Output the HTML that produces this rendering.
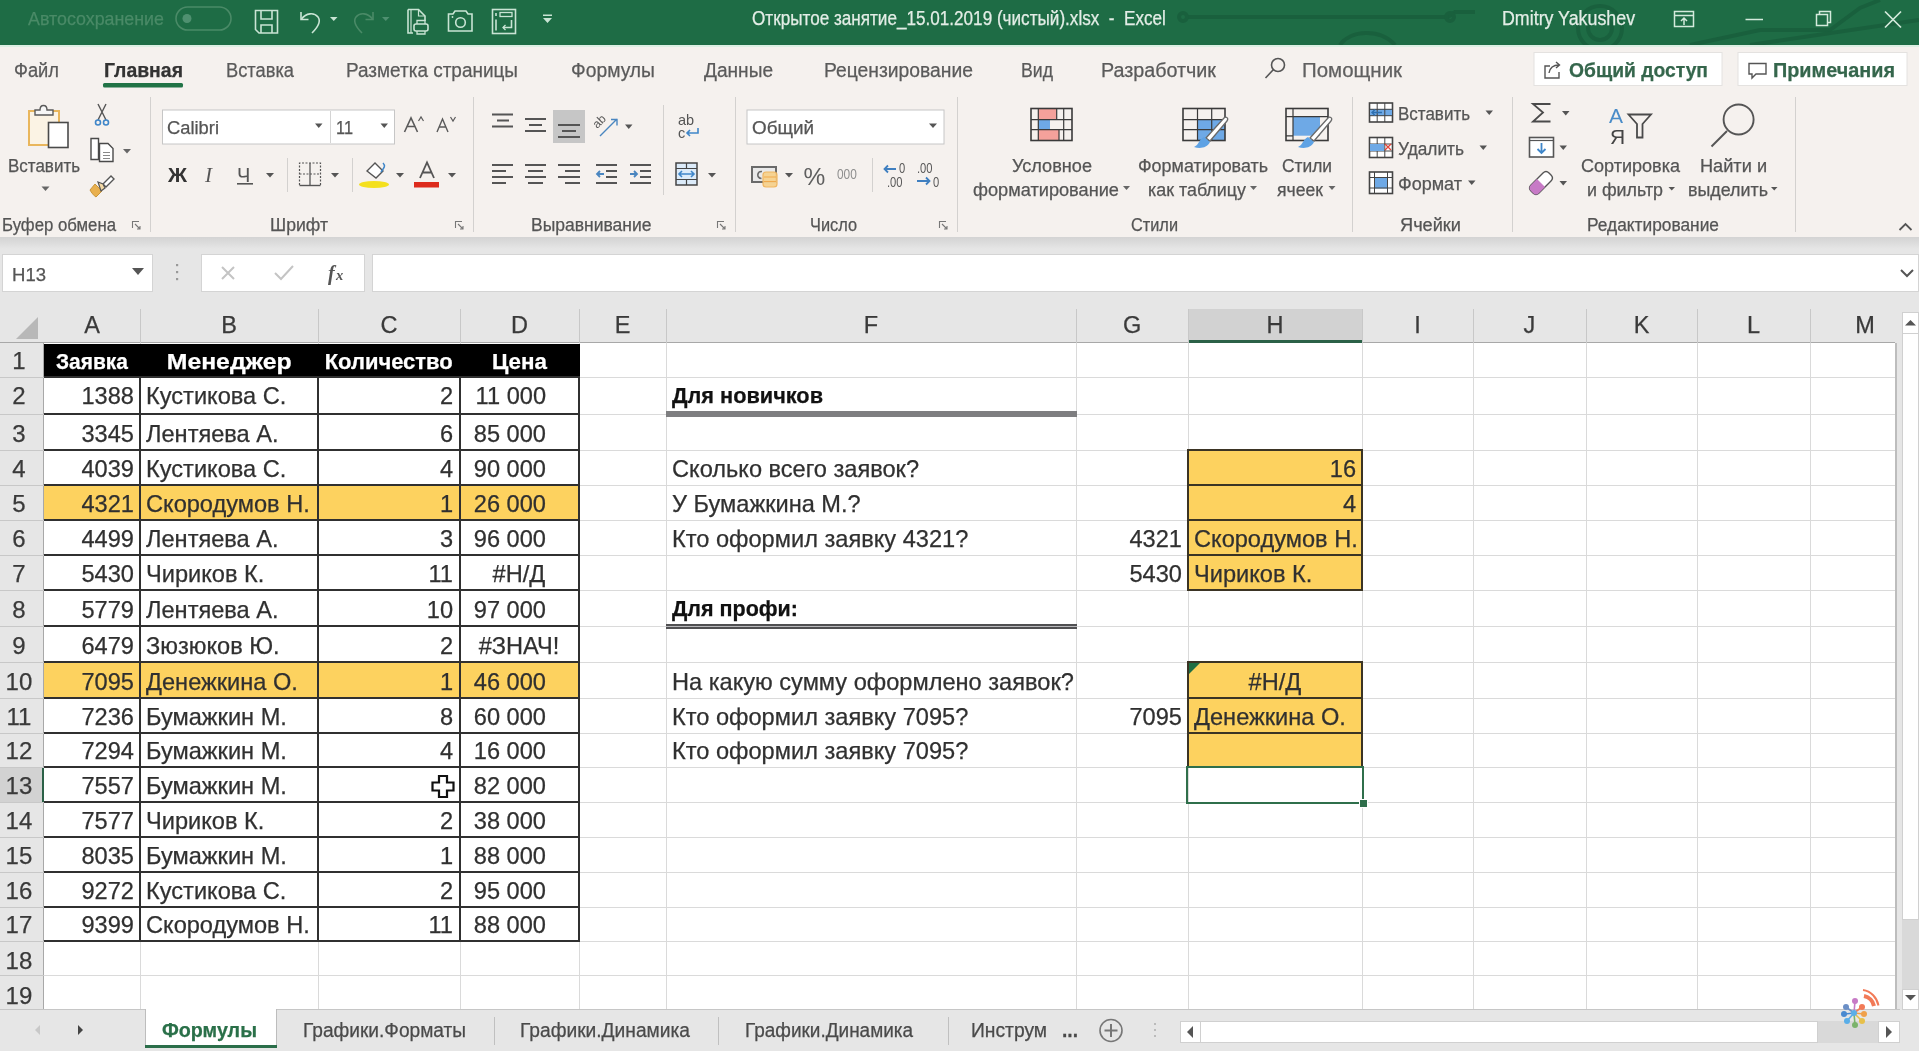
<!DOCTYPE html>
<html><head><meta charset="utf-8">
<style>
html,body{margin:0;padding:0}
body{width:1919px;height:1051px;overflow:hidden;position:relative;background:#fff;font-family:"Liberation Sans",sans-serif}
.a{position:absolute}
.t{position:absolute;white-space:pre;line-height:normal;-webkit-text-stroke:0.25px currentColor}
svg{position:absolute;overflow:visible}
</style></head><body><div style="position:absolute;left:0;top:0;width:1919px;height:1051px;overflow:hidden;filter:blur(0.7px)">
<!-- title bar -->
<div class="a" style="left:0;top:0;width:1919px;height:45px;background:#1e6c45"></div>
<!-- tabs + ribbon -->
<div class="a" style="left:0;top:45px;width:1919px;height:2px;background:#dcefe3;z-index:1"></div>
<div class="a" style="left:0;top:45px;width:1919px;height:193px;background:#f5f1ee"></div>
<!-- formula area -->
<div class="a" style="left:0;top:237px;width:1919px;height:73px;background:#e6e6e6"></div>
<div class="a" style="left:0;top:237px;width:1919px;height:12px;background:linear-gradient(#d3d3d3,#e6e6e6)"></div>
<div class="a" style="left:2px;top:254px;width:151px;height:38px;background:#fff;border:1px solid #d4d4d4;box-sizing:border-box"></div>
<div class="a" style="left:201px;top:254px;width:164px;height:38px;background:#fff;border:1px solid #d4d4d4;box-sizing:border-box"></div>
<div class="a" style="left:372px;top:254px;width:1547px;height:38px;background:#fff;border:1px solid #d4d4d4;box-sizing:border-box"></div>
<!-- column header -->
<div class="a" style="left:0;top:309px;width:1900px;height:34px;background:#e6e6e6"></div>
<div class="a" style="left:1188px;top:309px;width:174px;height:34px;background:#d2d2d2"></div>
<div class="a" style="left:0;top:342px;width:1895px;height:1px;background:#a8a8a8"></div>
<div class="a" style="left:1188px;top:340px;width:174px;height:3px;background:#2b6147"></div>
<!-- row header -->
<div class="a" style="left:0;top:343px;width:44px;height:667px;background:#e6e6e6"></div>
<div class="a" style="left:0;top:767px;width:44px;height:35px;background:#d2d2d2"></div>
<div class="a" style="left:43px;top:343px;width:1px;height:667px;background:#a8a8a8"></div>
<div class="a" style="left:42px;top:767px;width:2px;height:35px;background:#2b6147"></div>
<!-- select-all triangle -->
<svg style="left:0;top:309px" width="44" height="34"><path d="M16 30 L38 30 L38 8 Z" fill="#b8b8b8"/></svg>
<div class="a" style="left:140px;top:309px;width:1px;height:34px;background:#c8c8c8"></div>
<div class="a" style="left:318px;top:309px;width:1px;height:34px;background:#c8c8c8"></div>
<div class="a" style="left:460px;top:309px;width:1px;height:34px;background:#c8c8c8"></div>
<div class="a" style="left:579px;top:309px;width:1px;height:34px;background:#c8c8c8"></div>
<div class="a" style="left:666px;top:309px;width:1px;height:34px;background:#c8c8c8"></div>
<div class="a" style="left:1076px;top:309px;width:1px;height:34px;background:#c8c8c8"></div>
<div class="a" style="left:1188px;top:309px;width:1px;height:34px;background:#c8c8c8"></div>
<div class="a" style="left:1362px;top:309px;width:1px;height:34px;background:#c8c8c8"></div>
<div class="a" style="left:1473px;top:309px;width:1px;height:34px;background:#c8c8c8"></div>
<div class="a" style="left:1586px;top:309px;width:1px;height:34px;background:#c8c8c8"></div>
<div class="a" style="left:1697px;top:309px;width:1px;height:34px;background:#c8c8c8"></div>
<div class="a" style="left:1810px;top:309px;width:1px;height:34px;background:#c8c8c8"></div>
<div class="a" style="left:0;top:377px;width:44px;height:1px;background:#c8c8c8"></div>
<div class="a" style="left:0;top:414px;width:44px;height:1px;background:#c8c8c8"></div>
<div class="a" style="left:0;top:450px;width:44px;height:1px;background:#c8c8c8"></div>
<div class="a" style="left:0;top:485px;width:44px;height:1px;background:#c8c8c8"></div>
<div class="a" style="left:0;top:520px;width:44px;height:1px;background:#c8c8c8"></div>
<div class="a" style="left:0;top:555px;width:44px;height:1px;background:#c8c8c8"></div>
<div class="a" style="left:0;top:590px;width:44px;height:1px;background:#c8c8c8"></div>
<div class="a" style="left:0;top:626px;width:44px;height:1px;background:#c8c8c8"></div>
<div class="a" style="left:0;top:662px;width:44px;height:1px;background:#c8c8c8"></div>
<div class="a" style="left:0;top:698px;width:44px;height:1px;background:#c8c8c8"></div>
<div class="a" style="left:0;top:733px;width:44px;height:1px;background:#c8c8c8"></div>
<div class="a" style="left:0;top:767px;width:44px;height:1px;background:#c8c8c8"></div>
<div class="a" style="left:0;top:802px;width:44px;height:1px;background:#c8c8c8"></div>
<div class="a" style="left:0;top:837px;width:44px;height:1px;background:#c8c8c8"></div>
<div class="a" style="left:0;top:872px;width:44px;height:1px;background:#c8c8c8"></div>
<div class="a" style="left:0;top:907px;width:44px;height:1px;background:#c8c8c8"></div>
<div class="a" style="left:0;top:941px;width:44px;height:1px;background:#c8c8c8"></div>
<div class="a" style="left:0;top:975px;width:44px;height:1px;background:#c8c8c8"></div>
<div class="a" style="left:0;top:1010px;width:44px;height:1px;background:#c8c8c8"></div>
<div class="a" style="left:140px;top:343px;width:1px;height:667px;background:#dadada"></div>
<div class="a" style="left:318px;top:343px;width:1px;height:667px;background:#dadada"></div>
<div class="a" style="left:460px;top:343px;width:1px;height:667px;background:#dadada"></div>
<div class="a" style="left:579px;top:343px;width:1px;height:667px;background:#dadada"></div>
<div class="a" style="left:666px;top:343px;width:1px;height:667px;background:#dadada"></div>
<div class="a" style="left:1076px;top:343px;width:1px;height:667px;background:#dadada"></div>
<div class="a" style="left:1188px;top:343px;width:1px;height:667px;background:#dadada"></div>
<div class="a" style="left:1362px;top:343px;width:1px;height:667px;background:#dadada"></div>
<div class="a" style="left:1473px;top:343px;width:1px;height:667px;background:#dadada"></div>
<div class="a" style="left:1586px;top:343px;width:1px;height:667px;background:#dadada"></div>
<div class="a" style="left:1697px;top:343px;width:1px;height:667px;background:#dadada"></div>
<div class="a" style="left:1810px;top:343px;width:1px;height:667px;background:#dadada"></div>
<div class="a" style="left:1895px;top:343px;width:1px;height:667px;background:#dadada"></div>
<div class="a" style="left:44px;top:377px;width:1851px;height:1px;background:#dadada"></div>
<div class="a" style="left:44px;top:414px;width:1851px;height:1px;background:#dadada"></div>
<div class="a" style="left:44px;top:450px;width:1851px;height:1px;background:#dadada"></div>
<div class="a" style="left:44px;top:485px;width:1851px;height:1px;background:#dadada"></div>
<div class="a" style="left:44px;top:520px;width:1851px;height:1px;background:#dadada"></div>
<div class="a" style="left:44px;top:555px;width:1851px;height:1px;background:#dadada"></div>
<div class="a" style="left:44px;top:590px;width:1851px;height:1px;background:#dadada"></div>
<div class="a" style="left:44px;top:626px;width:1851px;height:1px;background:#dadada"></div>
<div class="a" style="left:44px;top:662px;width:1851px;height:1px;background:#dadada"></div>
<div class="a" style="left:44px;top:698px;width:1851px;height:1px;background:#dadada"></div>
<div class="a" style="left:44px;top:733px;width:1851px;height:1px;background:#dadada"></div>
<div class="a" style="left:44px;top:767px;width:1851px;height:1px;background:#dadada"></div>
<div class="a" style="left:44px;top:802px;width:1851px;height:1px;background:#dadada"></div>
<div class="a" style="left:44px;top:837px;width:1851px;height:1px;background:#dadada"></div>
<div class="a" style="left:44px;top:872px;width:1851px;height:1px;background:#dadada"></div>
<div class="a" style="left:44px;top:907px;width:1851px;height:1px;background:#dadada"></div>
<div class="a" style="left:44px;top:941px;width:1851px;height:1px;background:#dadada"></div>
<div class="a" style="left:44px;top:975px;width:1851px;height:1px;background:#dadada"></div>
<div class="a" style="left:44px;top:1010px;width:1851px;height:1px;background:#dadada"></div>
<!-- fills -->
<div class="a" style="left:44px;top:344px;width:536px;height:34px;background:#000"></div>
<div class="a" style="left:44px;top:485px;width:536px;height:35px;background:#fdd25f"></div>
<div class="a" style="left:44px;top:662px;width:536px;height:36px;background:#fdd25f"></div>
<div class="a" style="left:1188px;top:450px;width:174px;height:140px;background:#fdd25f"></div>
<div class="a" style="left:1188px;top:662px;width:174px;height:105px;background:#fdd25f"></div>
<div class="a" style="left:44px;top:376px;width:536px;height:2px;background:#303030"></div>
<div class="a" style="left:44px;top:413px;width:536px;height:2px;background:#303030"></div>
<div class="a" style="left:44px;top:449px;width:536px;height:2px;background:#303030"></div>
<div class="a" style="left:44px;top:484px;width:536px;height:2px;background:#303030"></div>
<div class="a" style="left:44px;top:519px;width:536px;height:2px;background:#303030"></div>
<div class="a" style="left:44px;top:554px;width:536px;height:2px;background:#303030"></div>
<div class="a" style="left:44px;top:589px;width:536px;height:2px;background:#303030"></div>
<div class="a" style="left:44px;top:625px;width:536px;height:2px;background:#303030"></div>
<div class="a" style="left:44px;top:661px;width:536px;height:2px;background:#303030"></div>
<div class="a" style="left:44px;top:697px;width:536px;height:2px;background:#303030"></div>
<div class="a" style="left:44px;top:732px;width:536px;height:2px;background:#303030"></div>
<div class="a" style="left:44px;top:766px;width:536px;height:2px;background:#303030"></div>
<div class="a" style="left:44px;top:801px;width:536px;height:2px;background:#303030"></div>
<div class="a" style="left:44px;top:836px;width:536px;height:2px;background:#303030"></div>
<div class="a" style="left:44px;top:871px;width:536px;height:2px;background:#303030"></div>
<div class="a" style="left:44px;top:906px;width:536px;height:2px;background:#303030"></div>
<div class="a" style="left:44px;top:940px;width:536px;height:2px;background:#303030"></div>
<div class="a" style="left:139px;top:377px;width:2px;height:565px;background:#303030"></div>
<div class="a" style="left:317px;top:377px;width:2px;height:565px;background:#303030"></div>
<div class="a" style="left:459px;top:377px;width:2px;height:565px;background:#303030"></div>
<div class="a" style="left:578px;top:377px;width:2px;height:565px;background:#303030"></div>
<div class="a" style="left:1187px;top:449px;width:176px;height:2px;background:#3b3424"></div>
<div class="a" style="left:1187px;top:484px;width:176px;height:2px;background:#3b3424"></div>
<div class="a" style="left:1187px;top:519px;width:176px;height:2px;background:#3b3424"></div>
<div class="a" style="left:1187px;top:554px;width:176px;height:2px;background:#3b3424"></div>
<div class="a" style="left:1187px;top:589px;width:176px;height:2px;background:#3b3424"></div>
<div class="a" style="left:1187px;top:449px;width:2px;height:142px;background:#3b3424"></div>
<div class="a" style="left:1361px;top:449px;width:2px;height:142px;background:#3b3424"></div>
<div class="a" style="left:1187px;top:661px;width:176px;height:2px;background:#3b3424"></div>
<div class="a" style="left:1187px;top:697px;width:176px;height:2px;background:#3b3424"></div>
<div class="a" style="left:1187px;top:732px;width:176px;height:2px;background:#3b3424"></div>
<div class="a" style="left:1187px;top:766px;width:176px;height:2px;background:#3b3424"></div>
<div class="a" style="left:1187px;top:661px;width:2px;height:107px;background:#3b3424"></div>
<div class="a" style="left:1361px;top:661px;width:2px;height:107px;background:#3b3424"></div>
<!-- F borders -->
<div class="a" style="left:666px;top:411px;width:411px;height:6px;background:#7e7e80"></div>
<div class="a" style="left:666px;top:624px;width:411px;height:5px;background:#505052"></div>
<div class="a" style="left:666px;top:626px;width:411px;height:1px;background:#b9b9bc"></div>
<!-- selection H13 -->
<div class="a" style="left:1186px;top:766px;width:178px;height:38px;border:2px solid #2f6f4b;box-sizing:border-box"></div>
<div class="a" style="left:1359px;top:799px;width:7px;height:7px;background:#2f6f4b;border:1px solid #fff"></div>
<!-- green error triangle H10 -->
<svg style="left:1189px;top:663px" width="12" height="12"><path d="M0 0 L11 0 L0 11 Z" fill="#1f6e43"/></svg>
<!-- scrollbars -->
<div class="a" style="left:1896px;top:309px;width:23px;height:701px;background:#e6e6e6"></div>
<div class="a" style="left:1895px;top:343px;width:2px;height:667px;background:#bdbdbd"></div>
<div class="a" style="left:1902px;top:312px;width:17px;height:678px;background:#d9d9d9"></div>
<div class="a" style="left:1902px;top:312px;width:17px;height:608px;background:#fff;border:1px solid #d0d0d0;box-sizing:border-box"></div>
<div class="a" style="left:0;top:1010px;width:1919px;height:41px;background:#e6e6e6"></div>
<div class="a" style="left:0;top:1009px;width:1900px;height:1px;background:#c6c6c6"></div>
<div class="a" style="left:145px;top:1009px;width:132px;height:38px;background:#fff;border-left:1px solid #bdbdbd;border-right:1px solid #bdbdbd;box-sizing:border-box"></div>
<div class="a" style="left:145px;top:1044.5px;width:132px;height:3.5px;background:#2b6e4a"></div>
<div class="a" style="left:1180px;top:1021px;width:698px;height:22px;background:#d9d9d9"></div>
<div class="a" style="left:1180px;top:1021px;width:638px;height:22px;background:#fff;border:1px solid #d0d0d0;box-sizing:border-box"></div>
<div class="a" style="left:1878px;top:1021px;width:22px;height:22px;background:#fff;border:1px solid #d0d0d0;box-sizing:border-box"></div>
<div class="a" style="left:1902px;top:989px;width:17px;height:21px;background:#fff;border:1px solid #d0d0d0;box-sizing:border-box"></div>
<div class="a" style="left:1902px;top:312px;width:17px;height:22px;background:#fff;border:1px solid #d0d0d0;box-sizing:border-box"></div>
<svg style="left:0;top:0" width="1919" height="1051" viewBox="0 0 1919 1051">
<!-- ===== TITLE BAR ===== -->
<!-- title bar pattern -->
<svg x="0" y="0" width="1919" height="45" style="position:static;overflow:hidden"><g fill="none" stroke="#195f3d" stroke-width="4" opacity="0.9">
 <path d="M1185 17 H1448 L1455 12 H1475"/>
 <circle cx="1183" cy="17" r="4"/>
 <circle cx="1450" cy="17" r="4"/>
 <path d="M1340 45 C1350 30 1380 28 1395 45"/>
 <circle cx="1600" cy="28" r="22"/>
 <circle cx="1600" cy="28" r="12"/>
 <path d="M1690 45 L1760 30 H1830 L1860 8 L1880 0"/>
 <path d="M1750 45 L1919 20"/>
</g></svg>

<g fill="none" stroke="#c9e4d4" stroke-width="1.6">
 <!-- autosave toggle -->
 <rect x="176" y="7" width="55" height="23" rx="11.5" stroke="#4a8a67"/>
 <!-- save -->
 <path d="M255.5 10.5 H277.5 V33 H259 L255.5 29.5 Z"/>
 <path d="M261 10.5 V19 H272 V10.5"/>
 <path d="M261 33 V25 H272 V33"/>
 <!-- undo -->
 <path d="M301 12 V19.5 H308.5"/>
 <path d="M301.5 19 C306 13 314 12 318 17 C321 21 318 27 312 33"/>
 <!-- redo (faded) -->
 <path d="M373 12 V19.5 H365.5" stroke="#4a8a67"/>
 <path d="M372.5 19 C368 13 360 12 356 17 C353 21 356 27 362 33" stroke="#4a8a67"/>
 <!-- print preview -->
 <path d="M408 9.5 H418.5 L425 16 V21"/>
 <path d="M418.5 9.5 V16 H425" stroke-width="1.2"/>
 <path d="M408 9.5 V33 H413"/>
 <path d="M411 9.5 V33" stroke-width="1.2"/>
 <rect x="414" y="24" width="14" height="7" rx="2"/>
 <path d="M417 24 V20.5 H425 V24 M417 31 V34 H425 V31" stroke-width="1.3"/>
 <!-- camera -->
 <path d="M448.5 14 H453 L455 11 H466 L468 14 H472 V31 H448.5 Z"/>
 <circle cx="460.5" cy="22.5" r="4.8"/>
 <circle cx="452.5" cy="17" r="0.9" fill="#c9e4d4" stroke="none"/>
 <!-- custom icon -->
 <rect x="492.5" y="9.5" width="23" height="24"/>
 <path d="M496 13 V16 M496 19.5 V30.5" stroke-width="1.6"/>
 <rect x="500" y="12.5" width="12" height="4" stroke-width="1.3"/>
 <path d="M511.5 20 V27.5 H503" />
 <path d="M505.5 25 L503 27.5 L505.5 30" stroke-width="1.3"/>
</g>
<g fill="#c9e4d4">
 <circle cx="187" cy="18.5" r="4.5" fill="#4f9070"/>
 <path d="M330 17 H337.5 L333.75 21 Z"/>
 <path d="M382 17 H389.5 L385.75 21 Z" fill="#4f9070"/>
 <path d="M543 14.5 H552 V16 H543 Z M543 18 H552 L547.5 23 Z"/>
</g>
<g fill="none" stroke="#d4eadc" stroke-width="1.5">
 <!-- ribbon display options -->
 <rect x="1674.5" y="11.5" width="19" height="15"/>
 <path d="M1674.5 15.5 H1693.5"/>
 <path d="M1684 25 V18 M1681 21 L1684 18 L1687 21"/>
 <!-- minimize -->
 <path d="M1745.5 19.5 H1763"/>
 <!-- restore -->
 <rect x="1816.5" y="14.5" width="11" height="11"/>
 <path d="M1819.5 14.5 V11.5 H1830.5 V22.5 H1827.5"/>
 <!-- close -->
 <path d="M1885 11.5 L1901 27.5 M1901 11.5 L1885 27.5" stroke-width="1.7"/>
</g>

<!-- ===== TABS ROW ===== -->
<rect x="103" y="83" width="80" height="4.5" rx="1.5" fill="#217346"/>
<g fill="none" stroke="#555" stroke-width="1.6">
 <circle cx="1278" cy="65" r="6.5"/>
 <path d="M1273.5 69.5 L1265.5 78"/>
</g>
<rect x="1534" y="52.5" width="188" height="33" fill="#fff" stroke="#e4e2e0"/>
<rect x="1738" y="52.5" width="169" height="33" fill="#fff" stroke="#e4e2e0"/>
<g fill="none" stroke="#555" stroke-width="1.4">
 <path d="M1550 66 H1545 V78 H1559 V72"/>
 <path d="M1549 73 C1550 67 1554 65 1559 65 M1556 62 L1559.5 65 L1556 68"/>
 <path d="M1749 63.5 H1766 V74 H1756 L1752 78 V74 H1749 Z"/>
</g>

<!-- ===== RIBBON ===== -->
<!-- group separators -->
<g fill="#d3d1cf">
 <rect x="150" y="97" width="1" height="135"/>
 <rect x="473" y="97" width="1" height="135"/>
 <rect x="735" y="97" width="1" height="135"/>
 <rect x="957" y="97" width="1" height="135"/>
 <rect x="1352" y="97" width="1" height="135"/>
 <rect x="1512" y="97" width="1" height="135"/>
 <rect x="1795" y="97" width="1" height="135"/>
 <rect x="287" y="158" width="1" height="34"/>
 <rect x="352" y="158" width="1" height="34"/>
 <rect x="663" y="105" width="1" height="90"/>
 <rect x="872" y="158" width="1" height="34"/>
</g>
<!-- dialog launchers -->
<g fill="none" stroke="#777" stroke-width="1.1">
 <path d="M132.5 228 V221.5 H139 M135 224 L140 229 M137 229 H140 V226"/>
 <path d="M455.5 228 V221.5 H462 M458 224 L463 229 M460 229 H463 V226"/>
 <path d="M717.5 228 V221.5 H724 M720 224 L725 229 M722 229 H725 V226"/>
 <path d="M939.5 228 V221.5 H946 M942 224 L947 229 M944 229 H947 V226"/>
</g>
<!-- collapse ribbon -->
<path d="M1899.5 230 L1905.5 224 L1911.5 230" fill="none" stroke="#555" stroke-width="1.8"/>

<!-- Clipboard -->
<rect x="29" y="111" width="30" height="34" fill="#fbf3e4" stroke="#e9b65c" stroke-width="2"/>
<path d="M35 115 V110 H40 C40 104 47 104 47 110 H53 V115 Z" fill="#f7f7f7" stroke="#5a5a5a" stroke-width="1.4"/>
<rect x="48.5" y="122.5" width="19.5" height="25" fill="#fff" stroke="#4a4a4a" stroke-width="1.6"/>
<path d="M41.5 186.5 H49.5 L45.5 191 Z" fill="#666"/>
<!-- scissors -->
<g fill="none" stroke="#555" stroke-width="1.4">
 <path d="M98 104 L106 120 M106 104 L98 120"/>
</g>
<g fill="none" stroke="#3f86c9" stroke-width="1.6">
 <circle cx="98" cy="122.5" r="2.5"/>
 <circle cx="106" cy="122.5" r="2.5"/>
</g>
<!-- copy -->
<g fill="#fff" stroke="#4a4a4a" stroke-width="1.4">
 <path d="M91 138.5 H98.5 V159.5 H91 Z"/>
 <path d="M99.5 143.5 H108 L113 148.5 V161.5 H99.5 Z"/>
</g>
<path d="M103 152.5 H110 M103 155.5 H110 M103 158.5 H110" stroke="#888" stroke-width="1"/>
<path d="M123 149 H131 L127 153.5 Z" fill="#666"/>
<!-- format painter -->
<path d="M103 184 L111 176 L114 179 L106 187 Z" fill="#fff" stroke="#555" stroke-width="1.4"/>
<path d="M95 184 L102 191 L96 197 C94 196 91 192 90 190 Z" fill="#e9b04e" stroke="#c9963a" stroke-width="1"/>
<path d="M98 182 L103 184 L105 188 L101 191 Z" fill="#f3d9a6" stroke="#555" stroke-width="1.2"/>

<!-- Font boxes -->
<rect x="162.5" y="110" width="232" height="34" fill="#fff" stroke="#c6c6c6"/>
<rect x="330" y="111" width="1" height="32" fill="#d4d4d4"/>
<g fill="#555">
 <path d="M315 123.5 H322.5 L318.75 128 Z"/>
 <path d="M380.5 123.5 H388 L384.25 128 Z"/>
 <path d="M266 173 H274 L270 177.5 Z"/>
 <path d="M331 173 H339 L335 177.5 Z"/>
 <path d="M396 173 H404 L400 177.5 Z"/>
 <path d="M448 173 H456 L452 177.5 Z"/>
</g>
<!-- A^ A˅ -->
<g fill="none" stroke="#5a5a5a" stroke-width="1.6">
 <path d="M404.5 132 L411 118 L417.5 132 M407 126.5 H415"/>
 <path d="M418.5 121 L421 117 L423.5 121" stroke-width="1.2"/>
 <path d="M437 132 L442.5 119 L448 132 M439.5 127 H445.5" stroke-width="1.4"/>
 <path d="M450.5 117 L453 121 L455.5 117" stroke-width="1.2"/>
</g>
<!-- Ж I Ч -->
<text x="168" y="181.5" font-family="Liberation Sans" font-weight="bold" font-size="21" fill="#333">Ж</text>
<text x="205" y="181.5" font-family="Liberation Serif" font-style="italic" font-size="21" fill="#555">I</text>
<text x="237" y="181.5" font-family="Liberation Sans" font-size="20" fill="#555">Ч</text>
<rect x="237" y="183" width="16" height="1.6" fill="#555"/>
<!-- borders icon -->
<g fill="none" stroke="#555" stroke-width="1.4">
 <path d="M299.5 185.5 H320.5"/>
 <path d="M310 163 V185.5" stroke-width="1.3"/>
 <path d="M299.5 185 V163 H320.5 V185 M299.5 174 H320.5" stroke-dasharray="2 1.5" stroke-width="1.2"/>
</g>
<!-- fill color -->
<path d="M367 171 L375 163 L383 171 L376 178 Z" fill="#fff" stroke="#555" stroke-width="1.4"/>
<path d="M381 172 C384 168 386 166 383 163" fill="none" stroke="#3f86c9" stroke-width="1.5"/>
<ellipse cx="374" cy="184.5" rx="15" ry="3.5" fill="#f4e01e"/>
<!-- font color -->
<path d="M420 178 L427 162.5 L434 178 M422.5 172.5 H431.5" fill="none" stroke="#555" stroke-width="1.8"/>
<rect x="414" y="182" width="25" height="5.5" fill="#dd2b1c"/>

<!-- Alignment -->
<rect x="553" y="110" width="32" height="33" fill="#c6c6c6"/>
<g stroke="#555" stroke-width="2" fill="none">
 <path d="M492 114.5 H513 M497 120.5 H509 M492 126.5 H513"/>
 <path d="M525 119 H546 M529 125 H542 M525 131 H546"/>
 <path d="M558 125 H580 M562 131 H576 M558 137 H580"/>
 <path d="M492 165 H513 M492 171 H506 M492 177 H513 M492 183 H506"/>
 <path d="M525 165 H546 M528 171 H543 M525 177 H546 M528 183 H543"/>
 <path d="M558 165 H580 M565 171 H580 M558 177 H580 M565 183 H580"/>
 <path d="M596 165 H617 M606 171 H617 M606 177 H617 M596 183 H617"/>
 <path d="M630 165 H651 M640 171 H651 M640 177 H651 M630 183 H651"/>
</g>
<g stroke="#4a86c0" stroke-width="1.8" fill="none">
 <path d="M604 174 H597 M600 171 L597 174 L600 177"/>
 <path d="M630 174 H637 M634 171 L637 174 L634 177"/>
 <path d="M600 136 L617 119 M611 119.5 H617 V125.5" stroke-width="1.4"/>
</g>
<text x="593" y="125" font-family="Liberation Sans" font-size="12" fill="#555" transform="rotate(-45 600 122)">ab</text>
<path d="M625 124.5 H632.5 L628.75 129 Z" fill="#555"/>
<!-- wrap text -->
<text x="678" y="125" font-family="Liberation Sans" font-size="14.5" fill="#555">ab</text>
<text x="678" y="138" font-family="Liberation Sans" font-size="14.5" fill="#555">c</text>
<path d="M698 128 V133 H687 M690 130 L687 133 L690 136" fill="none" stroke="#3f86c9" stroke-width="1.6"/>
<!-- merge -->
<rect x="676" y="163" width="21" height="22" fill="#dcebf9" stroke="#444" stroke-width="1.5"/>
<path d="M676 168.5 H697 M676 179.5 H697 M686.5 163 V168.5 M686.5 179.5 V185" stroke="#444" stroke-width="1.2"/>
<path d="M679 174 H694 M682 171 L679 174 L682 177 M691 171 L694 174 L691 177" fill="none" stroke="#3f86c9" stroke-width="1.6"/>
<path d="M708 173 H716 L712 177.5 Z" fill="#555"/>

<!-- Number -->
<rect x="747" y="110" width="197" height="34" fill="#fff" stroke="#c6c6c6"/>
<path d="M929 123.5 H937 L933 128 Z" fill="#555"/>
<rect x="752" y="167" width="24" height="15" fill="#e9e9e9" stroke="#6a6a6a" stroke-width="2"/>
<path d="M762 171.5 C757 171 756 178 761.5 178.5" fill="none" stroke="#6a6a6a" stroke-width="1.6"/>
<rect x="763" y="172" width="14" height="15" rx="3" fill="#f7d28e" stroke="#f0b35a" stroke-width="1.2" opacity="0.95"/>
<path d="M764 177 H776 M764 181.5 H776" stroke="#f0a94c" stroke-width="1"/>
<path d="M785 173 H793 L789 177.5 Z" fill="#555"/>
<text x="803.5" y="185" font-family="Liberation Sans" font-size="24.5" fill="#5f5f5f">%</text>
<text x="837" y="179.5" font-family="Liberation Sans" font-size="14" fill="#8f8f8f" transform="translate(837 0) scale(0.85 1) translate(-837 0)">000</text>
<g font-family="Liberation Sans" font-size="14" fill="#5a5a5a">
<text x="899" y="173" transform="translate(899 0) scale(0.8 1) translate(-899 0)">0</text>
<text x="887" y="187" transform="translate(887 0) scale(0.8 1) translate(-887 0)">.00</text>
<text x="917" y="173" transform="translate(917 0) scale(0.8 1) translate(-917 0)">.00</text>
<text x="933" y="187" transform="translate(933 0) scale(0.8 1) translate(-933 0)">0</text>
</g>
<path d="M896 169 H884.5 M888 165.5 L884.5 169 L888 172.5" fill="none" stroke="#3f7fc0" stroke-width="1.8"/>
<path d="M917 181 H929.5 M926 177.5 L929.5 181 L926 184.5" fill="none" stroke="#3f7fc0" stroke-width="1.8"/>

<!-- Conditional formatting -->
<rect x="1038" y="108.5" width="18.5" height="11" fill="#f4a19b"/>
<rect x="1038" y="130" width="21" height="10.5" fill="#f4a19b"/>
<rect x="1038" y="119.5" width="12" height="10.5" fill="#6ea9e6"/>
<g fill="none" stroke="#3a3a3a" stroke-width="1.6">
 <rect x="1031" y="108.5" width="41" height="32"/>
 <path d="M1038.3 108.5 V140.5 M1056.7 108.5 V119.7 M1063.7 108.5 V140.5 M1059 130 V140.5 M1031 119.7 H1072 M1031 129.7 H1072" stroke-width="1.2"/>
</g>
<path d="M1123 186 H1130 L1126.5 190 Z" fill="#666"/>
<!-- Format as table -->
<rect x="1197.5" y="119.7" width="27.5" height="20.8" fill="#6ea9e6"/>
<g fill="none" stroke="#3a3a3a" stroke-width="1.6">
 <rect x="1183" y="108.5" width="42" height="32"/>
 <path d="M1197.5 108.5 V140.5 M1211.7 108.5 V140.5 M1183 119.7 H1225 M1183 129.7 H1225" stroke-width="1.2"/>
</g>
<path d="M1206 138 L1224 118 C1226 116 1229 118 1227 121 L1210 141 Z" fill="#fff" stroke="#6a6a6a" stroke-width="1.3"/>
<path d="M1204 137 L1210 142 C1207 148 1200 149 1194 147 C1199 145 1199 139 1204 137 Z" fill="#5ea2e4"/>
<path d="M1250 186 H1257 L1253.5 190 Z" fill="#666"/>
<!-- Cell styles -->
<rect x="1293" y="116.7" width="27" height="19" fill="#6ea9e6"/>
<g fill="none" stroke="#3a3a3a" stroke-width="1.6">
 <rect x="1286" y="108.5" width="42" height="32"/>
 <path d="M1293 108.5 V140.5 M1286 116.7 H1328 M1286 135.8 H1293" stroke-width="1.2"/>
</g>
<path d="M1310 138 L1328 118 C1330 116 1333 118 1331 121 L1314 141 Z" fill="#fff" stroke="#6a6a6a" stroke-width="1.3"/>
<path d="M1308 137 L1314 142 C1311 148 1304 149 1298 147 C1303 145 1303 139 1308 137 Z" fill="#5ea2e4"/>
<path d="M1328.5 186 H1335.5 L1332 190 Z" fill="#666"/>

<!-- Cells group -->
<g>
 <rect x="1369.5" y="103" width="23" height="19" fill="#fff" stroke="#444" stroke-width="1.6"/>
 <rect x="1370" y="109" width="22" height="7" fill="#6ea9e6"/>
 <path d="M1369.5 109.3 H1392.5 M1369.5 115.7 H1392.5 M1377.2 103 V122 M1384.8 103 V122" stroke="#444" stroke-width="1"/>
 <path d="M1382 112.5 H1372 M1375 109.5 L1372 112.5 L1375 115.5" fill="none" stroke="#2d6fb0" stroke-width="1.4"/>
 <rect x="1369.5" y="137.5" width="23" height="20" fill="#fff" stroke="#444" stroke-width="1.6"/>
 <path d="M1369.5 144 H1392.5 M1369.5 151 H1392.5 M1377.2 137.5 V157.5 M1384.8 137.5 V157.5" stroke="#444" stroke-width="1"/>
 <rect x="1370" y="144" width="14" height="7" fill="#6ea9e6"/>
 <path d="M1385 144 L1391 150 M1391 144 L1385 150" stroke="#e0443a" stroke-width="1.3"/>
 <rect x="1369.5" y="172" width="23" height="21.5" fill="#fff" stroke="#444" stroke-width="1.6"/>
 <rect x="1374" y="177" width="14" height="11.5" fill="#6ea9e6"/>
 <path d="M1369.5 177.5 H1392.5 M1369.5 188 H1392.5 M1374.5 172 V193.5 M1387.5 172 V193.5" stroke="#444" stroke-width="1"/>
</g>
<g fill="#555">
 <path d="M1485.5 110.5 H1493 L1489.25 115 Z"/>
 <path d="M1479.5 145.5 H1487 L1483.25 150 Z"/>
 <path d="M1468 180.5 H1475.5 L1471.75 185 Z"/>
</g>

<!-- Editing -->
<path d="M1550.5 104 H1533 L1543 112.5 L1533 121.5 H1550.5" fill="none" stroke="#4a4a4a" stroke-width="1.8"/>
<rect x="1529.5" y="137.5" width="24" height="19.5" fill="#fff" stroke="#555" stroke-width="1.6"/>
<path d="M1529.5 140.5 H1553.5" stroke="#555" stroke-width="1.2"/>
<path d="M1541.5 143 V153 M1537.5 149 L1541.5 153 L1545.5 149" fill="none" stroke="#3f86c9" stroke-width="1.8"/>
<path d="M1531 185 L1543 173 C1545 171 1547 171 1549 173 L1551 175 C1553 177 1553 179 1551 181 L1539 193 C1537 195 1535 195 1533 193 L1531 191 C1529 189 1529 187 1531 185 Z" fill="#fff" stroke="#555" stroke-width="1.4"/>
<path d="M1531 185 L1537 179 L1545 187 L1539 193 C1537 195 1535 195 1533 193 L1531 191 C1529 189 1529 187 1531 185 Z" fill="#c77ac6"/>
<g fill="#555">
 <path d="M1562 111 H1569.5 L1565.75 115.5 Z"/>
 <path d="M1559.5 145.5 H1567 L1563.25 150 Z"/>
 <path d="M1559.5 181 H1567 L1563.25 185.5 Z"/>
 <path d="M1668.5 187 H1675 L1671.75 190.5 Z"/>
 <path d="M1771 187 H1777.5 L1774.25 190.5 Z"/>
</g>
<text x="1609" y="122.5" font-family="Liberation Sans" font-size="21" fill="#4a8cc8">A</text>
<text x="1610" y="143.5" font-family="Liberation Sans" font-size="21" fill="#444">Я</text>
<path d="M1628.5 114.5 H1651 L1642.5 124 V137.5 H1637 V124 Z" fill="none" stroke="#4a4a4a" stroke-width="1.8"/>
<circle cx="1738.6" cy="119.5" r="15" fill="none" stroke="#555" stroke-width="1.9"/>
<path d="M1727 131 L1711.5 146.5" stroke="#555" stroke-width="1.9"/>

<!-- ===== FORMULA BAR ===== -->
<path d="M132 268 H144 L138 275 Z" fill="#555"/>
<g fill="#999">
 <rect x="176" y="264" width="2.2" height="2.2"/>
 <rect x="176" y="271" width="2.2" height="2.2"/>
 <rect x="176" y="278" width="2.2" height="2.2"/>
</g>
<path d="M222 267 L234 279 M234 267 L222 279" stroke="#c4c4c4" stroke-width="2"/>
<path d="M275 273 L281 279 L293 266" fill="none" stroke="#c4c4c4" stroke-width="2"/>
<text x="328" y="280" font-family="Liberation Serif" font-style="italic" font-weight="bold" font-size="20" fill="#555">f</text>
<text x="336" y="280" font-family="Liberation Serif" font-style="italic" font-weight="bold" font-size="14.5" fill="#555">x</text>
<path d="M1901 270 L1907 276 L1913 270" fill="none" stroke="#555" stroke-width="2"/>

<!-- ===== SHEET TABS & SCROLL ===== -->
<path d="M40 1025 L35 1030 L40 1035 Z" fill="#c8c8c8"/>
<path d="M78 1025 L83 1030 L78 1035 Z" fill="#444"/>
<rect x="494" y="1017" width="1" height="28" fill="#c0c0c0"/>
<rect x="718" y="1017" width="1" height="28" fill="#c0c0c0"/>
<rect x="948" y="1017" width="1" height="28" fill="#c0c0c0"/>
<circle cx="1111" cy="1030.5" r="11" fill="none" stroke="#777" stroke-width="1.6"/>
<path d="M1104.5 1030.5 H1117.5 M1111 1024 V1037" stroke="#777" stroke-width="2"/>
<g fill="#bbb">
 <rect x="1154" y="1023" width="2" height="2"/>
 <rect x="1154" y="1029" width="2" height="2"/>
 <rect x="1154" y="1035" width="2" height="2"/>
</g>
<rect x="1180.5" y="1021.5" width="20" height="21" fill="#fff" stroke="#d0d0d0"/>
<path d="M1193 1026 L1187 1032 L1193 1038 Z" fill="#555"/>
<path d="M1886 1026 L1892 1032 L1886 1038 Z" fill="#555"/>
<path d="M1904 318 L1910 312 L1916 318" fill="none" stroke="#555" stroke-width="0"/>
<path d="M1905 325.5 H1916 L1910.5 320 Z" fill="#555"/>
<path d="M1905 995 H1916 L1910.5 1000.5 Z" fill="#555"/>
<!-- logo watermark -->
<g>
 <path d="M1863 990 C1871 991 1877 998 1878.5 1005.5" fill="none" stroke="#f27a57" stroke-width="2"/>
 <path d="M1864 996 C1869 997 1873 1001 1874 1006" fill="none" stroke="#f27a57" stroke-width="4"/>
 <g stroke-width="1.6">
  <path d="M1854 1013 L1846 1007" stroke="#6b8fc6"/>
  <path d="M1854 1013 L1855 1001" stroke="#c77ac6"/>
  <path d="M1854 1013 L1862 1007" stroke="#f27a57"/>
  <path d="M1854 1013 L1845 1014" stroke="#4a8ad0"/>
  <path d="M1854 1013 L1847 1021" stroke="#5aaee8"/>
  <path d="M1854 1013 L1855 1025" stroke="#7bb36b"/>
  <path d="M1854 1013 L1862 1021" stroke="#e7c04a"/>
  <path d="M1854 1013 L1864 1014" stroke="#f0a04a"/>
 </g>
 <circle cx="1846" cy="1007" r="3" fill="#6b8fc6"/>
 <circle cx="1855" cy="1001" r="3" fill="#c77ac6"/>
 <circle cx="1862" cy="1007" r="3" fill="#f27a57"/>
 <circle cx="1844" cy="1014" r="3" fill="#4a8ad0"/>
 <circle cx="1847" cy="1021" r="3" fill="#5aaee8"/>
 <circle cx="1855" cy="1025" r="3" fill="#7bb36b"/>
 <circle cx="1862" cy="1021" r="3" fill="#e7c04a"/>
 <circle cx="1864" cy="1014" r="3" fill="#f0a04a"/>
 <circle cx="1854" cy="1013" r="3" fill="#5aaee8"/>
</g>
</svg>

<div class="t" style="left:28.0px;top:7.8px;font-size:19px;color:#4a8a67;transform:scaleX(0.939);transform-origin:left;">Автосохранение</div>
<div class="t" style="left:752.0px;top:7.4px;font-size:19.5px;color:#e3ede6;transform:scaleX(0.878);transform-origin:left;">Открытое занятие_15.01.2019 (чистый).xlsx  -  Excel</div>
<div class="t" style="left:1502.0px;top:7.4px;font-size:19.5px;color:#e3ede6;transform:scaleX(0.914);transform-origin:left;">Dmitry Yakushev</div>
<div class="t" style="left:14.0px;top:58.9px;font-size:20px;color:#5a5a5a;transform:scaleX(0.915);transform-origin:left;">Файл</div>
<div class="t" style="left:104.0px;top:58.9px;font-size:20px;color:#333;font-weight:bold;transform:scaleX(0.971);transform-origin:left;">Главная</div>
<div class="t" style="left:226.0px;top:58.9px;font-size:20px;color:#5a5a5a;transform:scaleX(0.915);transform-origin:left;">Вставка</div>
<div class="t" style="left:346.0px;top:58.9px;font-size:20px;color:#5a5a5a;transform:scaleX(0.948);transform-origin:left;">Разметка страницы</div>
<div class="t" style="left:571.0px;top:58.9px;font-size:20px;color:#5a5a5a;transform:scaleX(0.965);transform-origin:left;">Формулы</div>
<div class="t" style="left:704.0px;top:58.9px;font-size:20px;color:#5a5a5a;transform:scaleX(0.955);transform-origin:left;">Данные</div>
<div class="t" style="left:824.0px;top:58.9px;font-size:20px;color:#5a5a5a;transform:scaleX(0.965);transform-origin:left;">Рецензирование</div>
<div class="t" style="left:1021.0px;top:58.9px;font-size:20px;color:#5a5a5a;transform:scaleX(0.884);transform-origin:left;">Вид</div>
<div class="t" style="left:1101.0px;top:58.9px;font-size:20px;color:#5a5a5a;transform:scaleX(0.986);transform-origin:left;">Разработчик</div>
<div class="t" style="left:1302.0px;top:58.9px;font-size:20px;color:#606060;transform:scaleX(1.023);transform-origin:left;">Помощник</div>
<div class="t" style="left:1569.0px;top:58.9px;font-size:20px;color:#35664c;font-weight:bold;transform:scaleX(0.964);transform-origin:left;">Общий доступ</div>
<div class="t" style="left:1773.0px;top:58.9px;font-size:20px;color:#35664c;font-weight:bold;transform:scaleX(0.991);transform-origin:left;">Примечания</div>
<div class="t" style="left:2.0px;top:215.2px;font-size:17.5px;color:#555555;transform:scaleX(0.959);transform-origin:left;">Буфер обмена</div>
<div class="t" style="left:270.0px;top:215.2px;font-size:17.5px;color:#555555;transform:scaleX(1.007);transform-origin:left;">Шрифт</div>
<div class="t" style="left:531.0px;top:215.2px;font-size:17.5px;color:#555555;">Выравнивание</div>
<div class="t" style="left:810.0px;top:215.2px;font-size:17.5px;color:#555555;transform:scaleX(0.934);transform-origin:left;">Число</div>
<div class="t" style="left:1131.0px;top:215.2px;font-size:17.5px;color:#555555;transform:scaleX(0.932);transform-origin:left;">Стили</div>
<div class="t" style="left:1400.0px;top:215.2px;font-size:17.5px;color:#555555;transform:scaleX(1.039);transform-origin:left;">Ячейки</div>
<div class="t" style="left:1587.0px;top:215.2px;font-size:17.5px;color:#555555;transform:scaleX(0.990);transform-origin:left;">Редактирование</div>
<div class="t" style="left:8.0px;top:156.2px;font-size:17.5px;color:#555555;transform:scaleX(0.971);transform-origin:left;">Вставить</div>
<div class="t" style="left:1012.0px;top:156.2px;font-size:17.5px;color:#555555;transform:scaleX(1.035);transform-origin:left;">Условное</div>
<div class="t" style="left:973.0px;top:180.2px;font-size:17.5px;color:#555555;transform:scaleX(1.039);transform-origin:left;">форматирование</div>
<div class="t" style="left:1138.0px;top:156.2px;font-size:17.5px;color:#555555;transform:scaleX(1.024);transform-origin:left;">Форматировать</div>
<div class="t" style="left:1148.0px;top:180.2px;font-size:17.5px;color:#555555;transform:scaleX(1.022);transform-origin:left;">как таблицу</div>
<div class="t" style="left:1282.0px;top:156.2px;font-size:17.5px;color:#555555;transform:scaleX(0.992);transform-origin:left;">Стили</div>
<div class="t" style="left:1277.0px;top:180.2px;font-size:17.5px;color:#555555;transform:scaleX(1.006);transform-origin:left;">ячеек</div>
<div class="t" style="left:1398.0px;top:104.2px;font-size:17.5px;color:#555555;transform:scaleX(0.971);transform-origin:left;">Вставить</div>
<div class="t" style="left:1398.0px;top:139.2px;font-size:17.5px;color:#555555;transform:scaleX(0.988);transform-origin:left;">Удалить</div>
<div class="t" style="left:1398.0px;top:174.2px;font-size:17.5px;color:#555555;transform:scaleX(1.029);transform-origin:left;">Формат</div>
<div class="t" style="left:1581.0px;top:156.2px;font-size:17.5px;color:#555555;transform:scaleX(1.031);transform-origin:left;">Сортировка</div>
<div class="t" style="left:1587.0px;top:180.2px;font-size:17.5px;color:#555555;transform:scaleX(1.020);transform-origin:left;">и фильтр</div>
<div class="t" style="left:1700.0px;top:156.2px;font-size:17.5px;color:#555555;transform:scaleX(1.038);transform-origin:left;">Найти и</div>
<div class="t" style="left:1688.0px;top:180.2px;font-size:17.5px;color:#555555;transform:scaleX(1.021);transform-origin:left;">выделить</div>
<div class="t" style="left:167.0px;top:118.2px;font-size:17.5px;color:#555;transform:scaleX(1.048);transform-origin:left;">Calibri</div>
<div class="t" style="left:336.0px;top:118.2px;font-size:17.5px;color:#555;transform:scaleX(0.936);transform-origin:left;">11</div>
<div class="t" style="left:752.0px;top:118.2px;font-size:17.5px;color:#555;transform:scaleX(1.077);transform-origin:left;">Общий</div>
<div class="t" style="left:12.0px;top:265.2px;font-size:17.5px;color:#555;transform:scaleX(1.059);transform-origin:left;">H13</div>
<div class="t" style="left:84.2px;top:311.7px;font-size:23.5px;color:#3a3a3a;">A</div>
<div class="t" style="left:221.2px;top:311.7px;font-size:23.5px;color:#3a3a3a;">B</div>
<div class="t" style="left:380.5px;top:311.7px;font-size:23.5px;color:#3a3a3a;">C</div>
<div class="t" style="left:511.0px;top:311.7px;font-size:23.5px;color:#3a3a3a;">D</div>
<div class="t" style="left:614.7px;top:311.7px;font-size:23.5px;color:#3a3a3a;">E</div>
<div class="t" style="left:863.8px;top:311.7px;font-size:23.5px;color:#3a3a3a;">F</div>
<div class="t" style="left:1122.9px;top:311.7px;font-size:23.5px;color:#3a3a3a;">G</div>
<div class="t" style="left:1266.5px;top:311.7px;font-size:23.5px;color:#3a3a3a;">H</div>
<div class="t" style="left:1414.2px;top:311.7px;font-size:23.5px;color:#3a3a3a;">I</div>
<div class="t" style="left:1523.6px;top:311.7px;font-size:23.5px;color:#3a3a3a;">J</div>
<div class="t" style="left:1633.7px;top:311.7px;font-size:23.5px;color:#3a3a3a;">K</div>
<div class="t" style="left:1747.0px;top:311.7px;font-size:23.5px;color:#3a3a3a;">L</div>
<div class="t" style="left:1855.2px;top:311.7px;font-size:23.5px;color:#3a3a3a;">M</div>
<div class="t" style="left:12.3px;top:347.3px;font-size:24px;color:#3a3a3a;">1</div>
<div class="t" style="left:12.3px;top:382.3px;font-size:24px;color:#3a3a3a;">2</div>
<div class="t" style="left:12.3px;top:420.3px;font-size:24px;color:#3a3a3a;">3</div>
<div class="t" style="left:12.3px;top:455.3px;font-size:24px;color:#3a3a3a;">4</div>
<div class="t" style="left:12.3px;top:490.3px;font-size:24px;color:#3a3a3a;">5</div>
<div class="t" style="left:12.3px;top:525.3px;font-size:24px;color:#3a3a3a;">6</div>
<div class="t" style="left:12.3px;top:560.3px;font-size:24px;color:#3a3a3a;">7</div>
<div class="t" style="left:12.3px;top:596.3px;font-size:24px;color:#3a3a3a;">8</div>
<div class="t" style="left:12.3px;top:632.3px;font-size:24px;color:#3a3a3a;">9</div>
<div class="t" style="left:5.6px;top:668.3px;font-size:24px;color:#3a3a3a;">10</div>
<div class="t" style="left:6.5px;top:703.3px;font-size:24px;color:#3a3a3a;">11</div>
<div class="t" style="left:5.6px;top:737.3px;font-size:24px;color:#3a3a3a;">12</div>
<div class="t" style="left:5.6px;top:772.3px;font-size:24px;color:#3a3a3a;">13</div>
<div class="t" style="left:5.6px;top:807.3px;font-size:24px;color:#3a3a3a;">14</div>
<div class="t" style="left:5.6px;top:842.3px;font-size:24px;color:#3a3a3a;">15</div>
<div class="t" style="left:5.6px;top:877.3px;font-size:24px;color:#3a3a3a;">16</div>
<div class="t" style="left:5.6px;top:911.3px;font-size:24px;color:#3a3a3a;">17</div>
<div class="t" style="left:5.6px;top:946.8px;font-size:24px;color:#3a3a3a;">18</div>
<div class="t" style="left:5.6px;top:981.8px;font-size:24px;color:#3a3a3a;">19</div>
<div class="t" style="left:55.0px;top:349.5px;font-size:21.5px;color:#fff;font-weight:bold;transform:scaleX(0.974);transform-origin:center;">Заявка</div>
<div class="t" style="left:174.7px;top:349.5px;font-size:21.5px;color:#fff;font-weight:bold;transform:scaleX(1.152);transform-origin:center;">Менеджер</div>
<div class="t" style="left:326.3px;top:349.5px;font-size:21.5px;color:#fff;font-weight:bold;transform:scaleX(1.021);transform-origin:center;">Количество</div>
<div class="t" style="left:493.1px;top:349.5px;font-size:21.5px;color:#fff;font-weight:bold;transform:scaleX(1.040);transform-origin:center;">Цена</div>
<div class="t" style="left:81.5px;top:382.6px;font-size:23.6px;color:#303030;">1388</div>
<div class="t" style="left:146.0px;top:382.6px;font-size:23.6px;color:#303030;">Кустикова С.</div>
<div class="t" style="left:439.9px;top:382.6px;font-size:23.6px;color:#303030;">2</div>
<div class="t" style="left:475.6px;top:382.6px;font-size:23.6px;color:#303030;">11 000</div>
<div class="t" style="left:81.5px;top:420.6px;font-size:23.6px;color:#303030;">3345</div>
<div class="t" style="left:146.0px;top:420.6px;font-size:23.6px;color:#303030;">Лентяева А.</div>
<div class="t" style="left:439.9px;top:420.6px;font-size:23.6px;color:#303030;">6</div>
<div class="t" style="left:473.8px;top:420.6px;font-size:23.6px;color:#303030;">85 000</div>
<div class="t" style="left:81.5px;top:455.6px;font-size:23.6px;color:#303030;">4039</div>
<div class="t" style="left:146.0px;top:455.6px;font-size:23.6px;color:#303030;">Кустикова С.</div>
<div class="t" style="left:439.9px;top:455.6px;font-size:23.6px;color:#303030;">4</div>
<div class="t" style="left:473.8px;top:455.6px;font-size:23.6px;color:#303030;">90 000</div>
<div class="t" style="left:81.5px;top:490.6px;font-size:23.6px;color:#303030;">4321</div>
<div class="t" style="left:146.0px;top:490.6px;font-size:23.6px;color:#303030;">Скородумов Н.</div>
<div class="t" style="left:439.9px;top:490.6px;font-size:23.6px;color:#303030;">1</div>
<div class="t" style="left:473.8px;top:490.6px;font-size:23.6px;color:#303030;">26 000</div>
<div class="t" style="left:81.5px;top:525.6px;font-size:23.6px;color:#303030;">4499</div>
<div class="t" style="left:146.0px;top:525.6px;font-size:23.6px;color:#303030;">Лентяева А.</div>
<div class="t" style="left:439.9px;top:525.6px;font-size:23.6px;color:#303030;">3</div>
<div class="t" style="left:473.8px;top:525.6px;font-size:23.6px;color:#303030;">96 000</div>
<div class="t" style="left:81.5px;top:560.6px;font-size:23.6px;color:#303030;">5430</div>
<div class="t" style="left:146.0px;top:560.6px;font-size:23.6px;color:#303030;">Чириков К.</div>
<div class="t" style="left:428.5px;top:560.6px;font-size:23.6px;color:#303030;">11</div>
<div class="t" style="left:492.6px;top:560.6px;font-size:23.6px;color:#303030;">#Н/Д</div>
<div class="t" style="left:81.5px;top:596.6px;font-size:23.6px;color:#303030;">5779</div>
<div class="t" style="left:146.0px;top:596.6px;font-size:23.6px;color:#303030;">Лентяева А.</div>
<div class="t" style="left:426.8px;top:596.6px;font-size:23.6px;color:#303030;">10</div>
<div class="t" style="left:473.8px;top:596.6px;font-size:23.6px;color:#303030;">97 000</div>
<div class="t" style="left:81.5px;top:632.6px;font-size:23.6px;color:#303030;">6479</div>
<div class="t" style="left:146.0px;top:632.6px;font-size:23.6px;color:#303030;">Зюзюков Ю.</div>
<div class="t" style="left:439.9px;top:632.6px;font-size:23.6px;color:#303030;">2</div>
<div class="t" style="left:478.7px;top:632.6px;font-size:23.6px;color:#303030;">#ЗНАЧ!</div>
<div class="t" style="left:81.5px;top:668.6px;font-size:23.6px;color:#303030;">7095</div>
<div class="t" style="left:146.0px;top:668.6px;font-size:23.6px;color:#303030;">Денежкина О.</div>
<div class="t" style="left:439.9px;top:668.6px;font-size:23.6px;color:#303030;">1</div>
<div class="t" style="left:473.8px;top:668.6px;font-size:23.6px;color:#303030;">46 000</div>
<div class="t" style="left:81.5px;top:703.6px;font-size:23.6px;color:#303030;">7236</div>
<div class="t" style="left:146.0px;top:703.6px;font-size:23.6px;color:#303030;">Бумажкин М.</div>
<div class="t" style="left:439.9px;top:703.6px;font-size:23.6px;color:#303030;">8</div>
<div class="t" style="left:473.8px;top:703.6px;font-size:23.6px;color:#303030;">60 000</div>
<div class="t" style="left:81.5px;top:737.6px;font-size:23.6px;color:#303030;">7294</div>
<div class="t" style="left:146.0px;top:737.6px;font-size:23.6px;color:#303030;">Бумажкин М.</div>
<div class="t" style="left:439.9px;top:737.6px;font-size:23.6px;color:#303030;">4</div>
<div class="t" style="left:473.8px;top:737.6px;font-size:23.6px;color:#303030;">16 000</div>
<div class="t" style="left:81.5px;top:772.6px;font-size:23.6px;color:#303030;">7557</div>
<div class="t" style="left:146.0px;top:772.6px;font-size:23.6px;color:#303030;">Бумажкин М.</div>
<div class="t" style="left:473.8px;top:772.6px;font-size:23.6px;color:#303030;">82 000</div>
<div class="t" style="left:81.5px;top:807.6px;font-size:23.6px;color:#303030;">7577</div>
<div class="t" style="left:146.0px;top:807.6px;font-size:23.6px;color:#303030;">Чириков К.</div>
<div class="t" style="left:439.9px;top:807.6px;font-size:23.6px;color:#303030;">2</div>
<div class="t" style="left:473.8px;top:807.6px;font-size:23.6px;color:#303030;">38 000</div>
<div class="t" style="left:81.5px;top:842.6px;font-size:23.6px;color:#303030;">8035</div>
<div class="t" style="left:146.0px;top:842.6px;font-size:23.6px;color:#303030;">Бумажкин М.</div>
<div class="t" style="left:439.9px;top:842.6px;font-size:23.6px;color:#303030;">1</div>
<div class="t" style="left:473.8px;top:842.6px;font-size:23.6px;color:#303030;">88 000</div>
<div class="t" style="left:81.5px;top:877.6px;font-size:23.6px;color:#303030;">9272</div>
<div class="t" style="left:146.0px;top:877.6px;font-size:23.6px;color:#303030;">Кустикова С.</div>
<div class="t" style="left:439.9px;top:877.6px;font-size:23.6px;color:#303030;">2</div>
<div class="t" style="left:473.8px;top:877.6px;font-size:23.6px;color:#303030;">95 000</div>
<div class="t" style="left:81.5px;top:911.6px;font-size:23.6px;color:#303030;">9399</div>
<div class="t" style="left:146.0px;top:911.6px;font-size:23.6px;color:#303030;">Скородумов Н.</div>
<div class="t" style="left:428.5px;top:911.6px;font-size:23.6px;color:#303030;">11</div>
<div class="t" style="left:473.8px;top:911.6px;font-size:23.6px;color:#303030;">88 000</div>
<div class="t" style="left:672.0px;top:383.1px;font-size:22.5px;color:#111;font-weight:bold;transform:scaleX(0.966);transform-origin:left;">Для новичков</div>
<div class="t" style="left:672.0px;top:455.6px;font-size:23.6px;color:#303030;">Сколько всего заявок?</div>
<div class="t" style="left:672.0px;top:490.6px;font-size:23.6px;color:#303030;">У Бумажкина М.?</div>
<div class="t" style="left:672.0px;top:525.6px;font-size:23.6px;color:#303030;">Кто оформил заявку 4321?</div>
<div class="t" style="left:672.0px;top:595.6px;font-size:22.5px;color:#111;font-weight:bold;transform:scaleX(0.956);transform-origin:left;">Для профи:</div>
<div class="t" style="left:672.0px;top:668.6px;font-size:23.6px;color:#303030;">На какую сумму оформлено заявок?</div>
<div class="t" style="left:672.0px;top:703.6px;font-size:23.6px;color:#303030;">Кто оформил заявку 7095?</div>
<div class="t" style="left:672.0px;top:737.6px;font-size:23.6px;color:#303030;">Кто оформил заявку 7095?</div>
<div class="t" style="left:1129.5px;top:525.6px;font-size:23.6px;color:#303030;">4321</div>
<div class="t" style="left:1129.5px;top:560.6px;font-size:23.6px;color:#303030;">5430</div>
<div class="t" style="left:1129.5px;top:703.6px;font-size:23.6px;color:#303030;">7095</div>
<div class="t" style="left:1329.8px;top:455.6px;font-size:23.6px;color:#303030;">16</div>
<div class="t" style="left:1342.9px;top:490.6px;font-size:23.6px;color:#303030;">4</div>
<div class="t" style="left:1194.0px;top:525.6px;font-size:23.6px;color:#303030;">Скородумов Н.</div>
<div class="t" style="left:1194.0px;top:560.6px;font-size:23.6px;color:#303030;">Чириков К.</div>
<div class="t" style="left:1248.6px;top:668.6px;font-size:23.6px;color:#303030;">#Н/Д</div>
<div class="t" style="left:1194.0px;top:703.6px;font-size:23.6px;color:#303030;">Денежкина О.</div>
<div class="t" style="left:162.0px;top:1019.4px;font-size:19.5px;color:#2a7049;font-weight:bold;transform:scaleX(1.010);transform-origin:left;">Формулы</div>
<div class="t" style="left:303.0px;top:1019.4px;font-size:19.5px;color:#4a4a4a;transform:scaleX(0.981);transform-origin:left;">Графики.Форматы</div>
<div class="t" style="left:520.0px;top:1019.4px;font-size:19.5px;color:#4a4a4a;transform:scaleX(0.984);transform-origin:left;">Графики.Динамика</div>
<div class="t" style="left:745.0px;top:1019.4px;font-size:19.5px;color:#4a4a4a;transform:scaleX(0.973);transform-origin:left;">Графики.Динамика</div>
<div class="t" style="left:971.0px;top:1019.4px;font-size:19.5px;color:#4a4a4a;transform:scaleX(0.987);transform-origin:left;">Инструм</div>
<div class="t" style="left:1062.0px;top:1019.4px;font-size:19.5px;color:#4a4a4a;font-weight:bold;transform:scaleX(0.984);transform-origin:left;">...</div>
<svg style="left:0;top:0" width="1919" height="1051">
<path d="M439 776 H447 V782.5 H453.5 V790.5 H447 V797 H439 V790.5 H432.5 V782.5 H439 Z" fill="#fff" stroke="#111" stroke-width="2.2"/>
</svg>

</div></body></html>
